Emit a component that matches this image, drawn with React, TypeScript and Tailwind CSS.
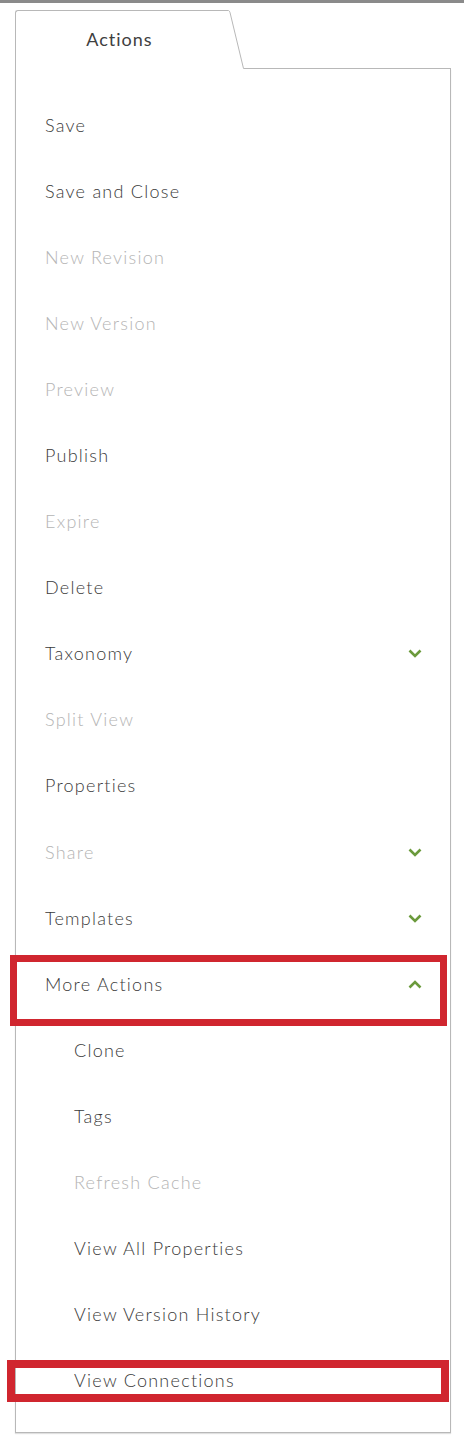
import React from "react";

type Item = {
  label: string;
  disabled?: boolean;
  chevron?: "down" | "up";
  sub?: boolean;
  mark?: "more" | "conn";
};

const items: Item[] = [
  { label: "Save" },
  { label: "Save and Close" },
  { label: "New Revision", disabled: true },
  { label: "New Version", disabled: true },
  { label: "Preview", disabled: true },
  { label: "Publish" },
  { label: "Expire", disabled: true },
  { label: "Delete" },
  { label: "Taxonomy", chevron: "down" },
  { label: "Split View", disabled: true },
  { label: "Properties" },
  { label: "Share", disabled: true, chevron: "down" },
  { label: "Templates", chevron: "down" },
  { label: "More Actions", chevron: "up", mark: "more" },
  { label: "Clone", sub: true },
  { label: "Tags", sub: true },
  { label: "Refresh Cache", sub: true, disabled: true },
  { label: "View All Properties", sub: true },
  { label: "View Version History", sub: true },
  { label: "View Connections", sub: true, mark: "conn" },
];

function Chevron({ dir }: { dir: "down" | "up" }) {
  return (
    <svg width="14" height="9" viewBox="0 0 14 9" className="text-[#6b9a3c]">
      <polyline
        points={dir === "down" ? "1.5,1.5 7,7 12.5,1.5" : "1.5,7.5 7,2 12.5,7.5"}
        fill="none"
        stroke="currentColor"
        strokeWidth="2.6"
      />
    </svg>
  );
}

export default function App() {
  return (
    <div className="w-[464px] min-h-[1440px] bg-white font-['Lato',sans-serif]">
      <div className="h-[3px] bg-[#8a8a8a]" />

      <div className="pl-[15px] pr-[13px] pt-[7px]">
        {/* Tab row */}
        <div className="flex h-[59px]">
          <div className="w-[213px] border-l border-t border-[#b8b8b8] rounded-tl-[3px] flex items-center justify-center pb-[1px]">
            <span className="text-[18px] text-[#404040] tracking-[1px] pr-[5px]">Actions</span>
          </div>
          <svg width="16" height="59" viewBox="0 0 16 59" className="shrink-0">
            <path d="M0 0.5 L0.5 0.5 Q1.5 0.8 2 2.5 L15.5 58.5 L16 58.5" fill="none" stroke="#b8b8b8" strokeWidth="1" />
          </svg>
          <div className="flex-1 border-b border-[#b8b8b8]" />
        </div>

        {/* Panel */}
        <div className="border-l border-r border-b border-[#b8b8b8] pt-[23px] pb-[18px] shadow-[0_1px_1px_rgba(0,0,0,0.12)]">
          {items.map((it) => (
            <div
              key={it.label}
              className={`relative h-[66.1px] flex items-center justify-between pr-[28px] ${
                it.sub ? "pl-[58px]" : "pl-[29px]"
              }`}
            >
              <span
                className={`text-[18px] font-light tracking-[1.25px] ${
                  it.disabled ? "text-[#b4b4b4]" : "text-[#3a3a3a]"
                }`}
              >
                {it.label}
              </span>
              {it.chevron && <Chevron dir={it.chevron} />}
              {it.mark === "more" && (
                <div className="absolute left-[-6px] right-[3px] top-[4px] h-[71px] border-[7px] border-[#d0262f]" />
              )}
              {it.mark === "conn" && (
                <div className="absolute left-[-9px] right-[1px] top-[12px] h-[42px] border-[8px] border-[#d0262f]" />
              )}
            </div>
          ))}
        </div>
      </div>
    </div>
  );
}
